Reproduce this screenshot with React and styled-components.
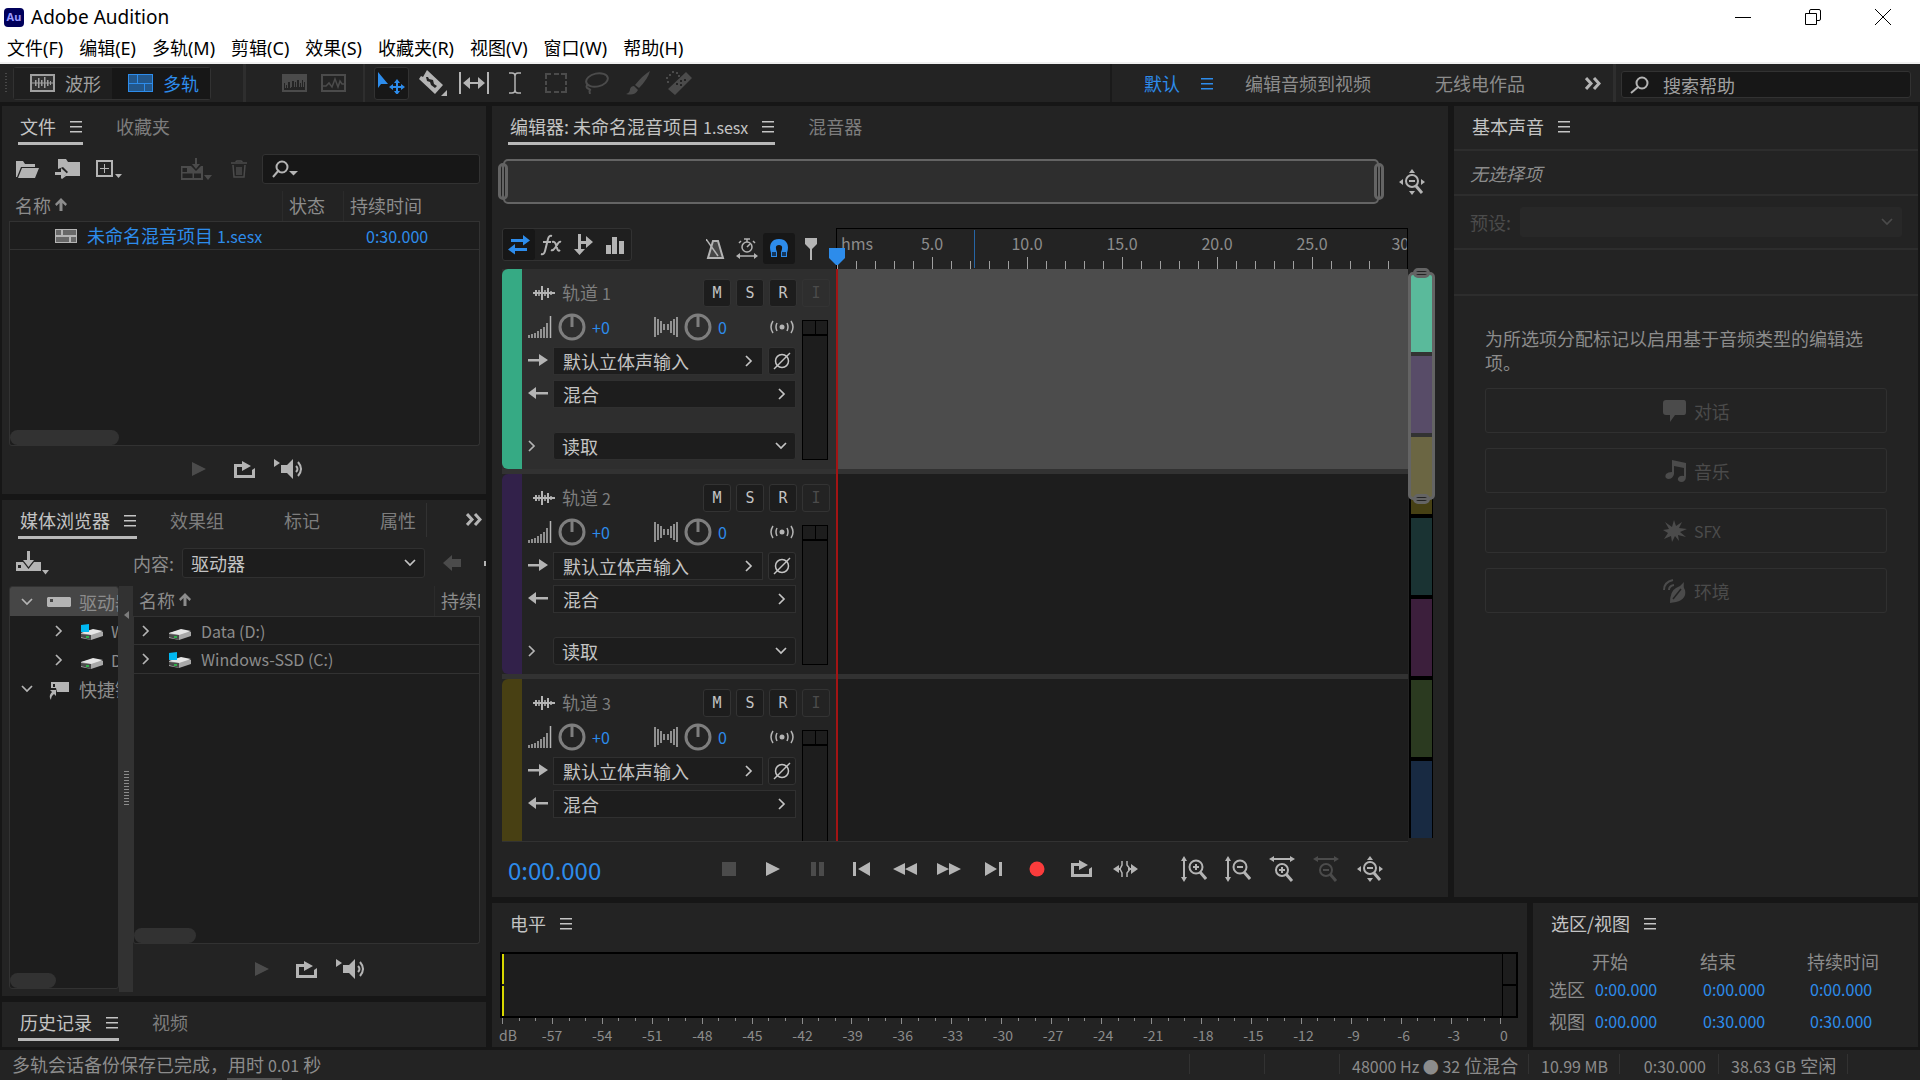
import styled, { createGlobalStyle, css } from "styled-components";

const COLORS = {
  APP: "#161616",
  PANEL: "#232323",
  WELL: "#1d1d1d",
  FIELD: "#171717",
  LINE: "#323232",
  TEXT: "#8c8c8c",
  BRIGHT: "#c4c4c4",
  ICON: "#b4b4b4",
  DISABLED: "#4b4b4b",
  BLUE: "#2d8ceb",
};

const FONTS = {
  APP: '"Noto Sans CJK SC", sans-serif',
  SYSTEM: '"Noto Sans", "Noto Sans CJK SC", sans-serif',
};

const GlobalStyle = createGlobalStyle`
  * {
    box-sizing: border-box;
  }
  body {
    margin: 0;
    background: ${COLORS.APP};
    font-family: ${FONTS.APP};
    font-size: 18px;
    line-height: 24px;
    color: ${COLORS.TEXT};
  }
  button, input, select {
    font: inherit;
    color: inherit;
    margin: 0;
    padding: 0;
    border: 0;
    background: none;
    outline: none;
  }
  svg {
    display: block;
    flex: none;
  }
`;

/* ---------- drawings ---------- */

const Glyph = ({ w, h, line, children }) => (
  <svg
    width={w}
    height={h}
    viewBox={`0 0 ${w} ${h}`}
    fill={line ? "none" : "currentColor"}
    stroke={line ? "currentColor" : "none"}
    strokeWidth={line || 0}
    aria-hidden="true"
  >
    {children}
  </svg>
);

const MenuLines = () => (
  <Glyph w={13} h={14}>
    <path d="M0 2h12v1H0zM0 7h12v1H0zM0 12h12v1H0z" />
    <path opacity=".5" d="M0 3h12v1H0zM0 8h12v1H0zM0 13h12v1H0z" />
  </Glyph>
);

const ChevronRight = () => (
  <Glyph w={8} h={12} line={2}>
    <path d="M1 1l5 5-5 5" strokeWidth="1.700" />
  </Glyph>
);

const ChevronDown = () => (
  <Glyph w={12} h={8} line={2}>
    <path d="M1 1l5 5 5-5" strokeWidth="1.700" />
  </Glyph>
);

const DoubleChevron = () => (
  <Glyph w={16} h={13} line={3}>
    <path d="M1 1l5 5.500-5 5.500M9 1l5 5.500-5 5.500" />
  </Glyph>
);

const SortArrow = () => (
  <Glyph w={12} h={14}>
    <path d="M6 0l6 6-1.500 2L7.500 5v8h-3V5l-3 3L0 6z" />
  </Glyph>
);

const SearchGlyph = () => (
  <Glyph w={19} h={18} line={2}>
    <circle cx="12" cy="7" r="5.500" />
    <path d="M8 11l-7 6" />
  </Glyph>
);

const WaveGlyph = () => (
  <Glyph w={25} h={18}>
    <path fillRule="evenodd" d="M0 0h25v18H0zM2 2v14h21V2z" />
    <path opacity=".15" d="M2 2h21v14H2z" />
    <path d="M2 8.500h21v1H2zM5 6h1.500v6H5zM8 4h1.500v10H8zM11 6h1.500v6H11zM14 3h1.500v11H14zM17 6h1.500v6H17zM20 7h1v4h-1z" />
  </Glyph>
);

const MultitrackGlyph = () => (
  <Glyph w={25} h={18}>
    <path opacity=".55" d="M0 0h25v18H0z" />
    <path fillRule="evenodd" d="M0 0h25v18H0zM1 1v8h8V1zM10 1v8h14V1zM1 10v7h15v-7zM17 10v7h7v-7z" />
  </Glyph>
);

const SessionGlyph = () => (
  <Glyph w={22} h={14}>
    <path opacity=".5" d="M0 0h22v14H0z" />
    <path fillRule="evenodd" d="M0 0h22v14H0zM1 1v5h5V1zM8 1v5h13V1zM1 8v5h13V8zM16 8v5h5V8z" />
  </Glyph>
);

const SpectralGlyph = () => (
  <Glyph w={25} h={18}>
    <path d="M0 0h25v18H0V0zm2 9v7h21V8h-1v5h-1V6h-1v7h-1V9h-1v4h-1V6h-2v7h-1V8h-1v5h-1V7h-2v6h-1V9H9v5H8V8H6v6H5v-3H4v3H3V9z" fillRule="evenodd" />
  </Glyph>
);

const PitchGlyph = () => (
  <Glyph w={25} h={18} line={2}>
    <path d="M1 1h23v16H1z" />
    <path d="M2 12h3l3-3 3 4 3-8 3 8 2-6 2 3h2" strokeWidth="1.500" />
  </Glyph>
);

const MoveGlyph = () => (
  <Glyph w={27} h={22}>
    <path d="M0 0l10 12H3l-3 4z" />
    <path d="M19 7l3 4h-2v3h3v-2l4 3-4 3v-2h-3v3h2l-3 4-3-4h2v-3h-3v2l-4-3 4-3v2h3v-3h-2z" />
  </Glyph>
);

const RazorGlyph = () => (
  <Glyph w={28} h={26}>
    <path fillRule="evenodd" d="M8 0l16 15-8 9L0 9l2-3 2 1zM7 7l1 4 3 1 1 3 4 3 2-2-3-2-1-4-4-1-1-2z" />
    <path d="M28 20v6h-6z" />
  </Glyph>
);

const TimeSelectGlyph = () => (
  <Glyph w={30} h={22}>
    <path d="M0 0h2v22H0zM28 0h2v22h-2z" />
    <path d="M4 11l7-6v5h8V5l7 6-7 6v-5h-8v5z" />
  </Glyph>
);

const BeamGlyph = () => (
  <Glyph w={12} h={22} line={2}>
    <path d="M0 1h3q3 0 3 3v14q0 3-3 3H0M12 1H9Q6 1 6 4v14q0 3 3 3h3" strokeWidth="1.500" />
  </Glyph>
);

const MarqueeGlyph = () => (
  <Glyph w={22} h={20} line={2}>
    <path d="M1 6V1h5M9 1h5M16 1h5v5M21 8v4M21 14v5h-5M14 19H9M6 19H1v-5M1 12V8" />
  </Glyph>
);

const LassoGlyph = () => (
  <Glyph w={25} h={22} line={2}>
    <ellipse cx="13" cy="8" rx="11" ry="6.500" transform="rotate(-12 13 8)" />
    <path d="M4 12q-3 3 0 4.500t2 1.500 0 4" />
  </Glyph>
);

const BrushGlyph = () => (
  <Glyph w={24} h={24}>
    <path d="M24 0q-2 8-11 17l-4-3Q17 4 24 0zM8 15l4 4q-3 6-12 4 4-1 4-5 1-3 4-3z" />
  </Glyph>
);

const HealGlyph = () => (
  <Glyph w={26} h={24}>
    <path fillRule="evenodd" d="M20 1l6 6L9 24l-7-6zM14 9v2h2V9zM18 8v2h2V8zM14 13v2h2v-2zM10 12v2h2v-2z" />
    <path d="M1 10h2v2H1zM0 6h2v2H0zM3 3h2v2H3zM6 0h2v2H6zM10 1h2v2h-2zM12 4h2v2h-2z" />
  </Glyph>
);

const FolderGlyph = () => (
  <Glyph w={23} h={18}>
    <path d="M0 17V1h7l2 3h10v3H5L1 17zM6 8h17l-4 10H2z" />
  </Glyph>
);

const ImportGlyph = () => (
  <Glyph w={25} h={20}>
    <path d="M3 10V0h8l2 3h12v14H11l-4 3v-4H0v-2h7v-3z" />
    <path d="M3 10l5-2 5 5-4 4H3z" fill={COLORS.PANEL} />
    <path d="M0 13h6v-4l6 5.500L6 20v-4H0z" />
  </Glyph>
);

const NewGlyph = () => (
  <Glyph w={26} h={18}>
    <path fillRule="evenodd" d="M0 0h17v17H0zM2 2v13h13V2z" />
    <path d="M8 4h1v4h4v1H9v4H8V9H4V8h4zM19 14h7l-3.500 4z" />
  </Glyph>
);

const InsertGlyph = () => (
  <Glyph w={31} h={23}>
    <path d="M14 0h2v6h3l-4 5-4-5h3zM23 17h8l-4 5z" />
    <path fillRule="evenodd" d="M0 8h10l5 5 5-5h2v14H0zM1.500 10v4H6v-4zM7.500 15.500H1.500V20h10v-4.500zM13 15.500V20h7v-4.500z" />
  </Glyph>
);

const TrashGlyph = () => (
  <Glyph w={16} h={18} line={2}>
    <path d="M0 3h16M5 2q0-1 1-1h4q1 0 1 1M2 5l1 12h10l1-12M6 7v8M8 7v8M10 7v8" strokeWidth="1.500" />
  </Glyph>
);

const FilterGlyph = () => (
  <Glyph w={26} h={18}>
    <circle cx="10" cy="7" r="5.500" fill="none" stroke="currentColor" strokeWidth="2" />
    <path d="M7 10l-6 7" stroke="currentColor" strokeWidth="2" />
    <path d="M17 11h9l-4.500 4.500z" />
  </Glyph>
);

const MediaImportGlyph = () => (
  <Glyph w={33} h={24}>
    <path d="M11 0h3v9h4l-5.500 7L7 9h4zM26 19h7l-3.500 4.500z" />
    <path fillRule="evenodd" d="M0 11h7l5.500 7 5.500-7h7v9H0zM2 14v3h3v-3z" />
  </Glyph>
);

const BackGlyph = () => (
  <Glyph w={18} h={16}>
    <path d="M9 0v4h9v8H9v4L0 8z" />
  </Glyph>
);

const DriveGlyph = () => (
  <Glyph w={24} h={10}>
    <path fillRule="evenodd" d="M1 0h22l1 1v8l-1 1H1L0 9V1zM3 2v3h3V2z" />
  </Glyph>
);

const ShortcutGlyph = () => (
  <Glyph w={24} h={22}>
    <path fillRule="evenodd" d="M4 4h18v10H10l-1-4H4zM6 6v3h2V6z" />
    <path d="M4 22q-3-4 1-8l-2-2h6v6l-2-2q-3 2-3 6z" />
  </Glyph>
);

const DiskGlyph = ({ system }) => (
  <svg width="22" height="20" viewBox="0 0 22 20" aria-hidden="true">
    <path d="M0 12l12-3 10 2v4l-12 4-10-2z" fill="#a8a8a8" />
    <path d="M0 12l12-4 10 2-12 4z" fill="#e6e6e6" />
    <path d="M0 13l10 1v5L0 16z" fill="#4a4a4a" />
    <path d="M5 15h3v2H5z" fill="#2fae4a" />
    {system && <path d="M0 4l8-1v8H0z" fill="#00b7f1" />}
  </svg>
);

const PlayGlyph = () => (
  <Glyph w={14} h={14}>
    <path d="M0 0l14 7-14 7z" />
  </Glyph>
);

const LoopGlyph = () => (
  <Glyph w={21} h={17}>
    <path d="M0 3h8V0l9 5-9 5V6H3v8h15V9l3-2v10H0z" />
  </Glyph>
);

const SpeakerGlyph = () => (
  <Glyph w={31} h={20}>
    <path d="M0 0l6 4-6 4zM7 6h6l6-6v20l-6-6H7z" />
    <path d="M22 7q3 3 0 6M24 3q6 7 0 14" fill="none" stroke="currentColor" strokeWidth="2" />
  </Glyph>
);

const SwapGlyph = () => (
  <Glyph w={22} h={20}>
    <path d="M3 4h12V0l7 5.500-7 5V7H3zM19 13H7V9l-7 5.500 7 5V16h12z" />
  </Glyph>
);

const FxGlyph = () => (
  <Glyph w={22} h={22} line={2}>
    <path d="M1 20q3 1 4-3l3-12q1-4 4-3M3 8h8M12 8q3-1 4 3l1 3q1 4 3 2M21 8q-2-1-4 3l-2 3q-2 3-4 2" />
  </Glyph>
);

const SendGlyph = () => (
  <Glyph w={19} h={21}>
    <path d="M4 0h3v7h5V2l7 6-7 6v-4H7v5h4l-5.500 6L0 15h4z" />
  </Glyph>
);

const EqGlyph = () => (
  <Glyph w={18} h={18}>
    <path d="M0 9h5v9H0zM6 1h5v17H6zM13 5h5v13h-5z" />
  </Glyph>
);

const MetronomeGlyph = () => (
  <Glyph w={19} h={20} line={2}>
    <path d="M7 2h5l5 17H2z" fill="currentColor" fillOpacity=".25" />
    <path d="M0 0l12 17" strokeWidth="1.500" />
  </Glyph>
);

const TimerGlyph = () => (
  <Glyph w={22} h={21} line={2}>
    <circle cx="11" cy="9" r="5" strokeWidth="1.500" />
    <path d="M8 1h6M11 1v3M17 3l2 2M5 3L3 5M11 9l3-3M3 18h16" strokeWidth="1.500" />
    <path d="M0 18l4-3v6zM22 18l-4-3v6z" fill="currentColor" stroke="none" />
  </Glyph>
);

const MagnetGlyph = () => (
  <Glyph w={18} h={19}>
    <path d="M1 18V14Q-2 5 4 1q5-2 10 0 6 4 3 13v4h-6v-5q3-7-2-7t-2 7v5z" />
    <path d="M2 13h4v4H2zM12 13h4v4h-4z" fill="#16365a" />
  </Glyph>
);

const MarkerGlyph = () => (
  <Glyph w={12} h={22}>
    <path d="M0 0h12v6L7 11v11H5V11L0 6z" />
  </Glyph>
);

const TrackWave = () => (
  <Glyph w={22} h={16} line={2}>
    <path d="M0 8h22M3 5v6M9 1v14M15 3v10" />
    <path d="M6 5v6M12 5v6M18 6v4" strokeWidth="1.500" />
  </Glyph>
);

const VolumeGlyph = () => (
  <Glyph w={24} h={22} line={2}>
    <path d="M1 22v-3M4 22v-4M7 22v-5M10 22v-7M13 22v-9M16 22V11M19 22V7M22.500 22V0" strokeWidth="1.500" />
  </Glyph>
);

const PanGlyph = () => (
  <Glyph w={24} h={20} line={2}>
    <path d="M1 0v20M4 2v16M7 4v12M10 7v6M14 7v6M17 4v12M20 2v16M23 0v20" strokeWidth="1.500" />
  </Glyph>
);

const KnobGlyph = () => (
  <Glyph w={28} h={28} line={3}>
    <circle cx="14" cy="14" r="12" stroke="#7e7e7e" />
    <path d="M14 2v12" stroke="#7e7e7e" />
  </Glyph>
);

const MonoGlyph = () => (
  <Glyph w={24} h={14} line={2}>
    <circle cx="12" cy="7" r="2.500" fill="currentColor" stroke="none" />
    <path d="M7 3q-2 4 0 8M17 3q2 4 0 8M3 1q-4 6 0 12M21 1q4 6 0 12" strokeWidth="1.500" />
  </Glyph>
);

const InArrow = () => (
  <Glyph w={20} h={14}>
    <path d="M0 5h11V0l9 6-9 6V7.500H0z" />
  </Glyph>
);

const OutArrow = () => (
  <Glyph w={20} h={14}>
    <path d="M20 5H8V0L0 6l8 6V7.500h12z" />
  </Glyph>
);

const PhaseGlyph = () => (
  <Glyph w={18} h={18} line={2}>
    <circle cx="9" cy="9" r="6.500" strokeWidth="1.500" />
    <path d="M1 17L17 1" strokeWidth="1.500" />
  </Glyph>
);

const StopGlyph = () => (
  <Glyph w={14} h={14}>
    <path d="M0 0h14v14H0z" />
  </Glyph>
);

const PauseGlyph = () => (
  <Glyph w={13} h={14}>
    <path d="M0 0h5v14H0zM8 0h5v14H8z" />
  </Glyph>
);

const PrevGlyph = () => (
  <Glyph w={17} h={14}>
    <path d="M0 0h3v14H0zM17 0v14L5 7z" />
  </Glyph>
);

const NextGlyph = () => (
  <Glyph w={17} h={14}>
    <path d="M14 0h3v14h-3zM0 0l12 7-12 7z" />
  </Glyph>
);

const RewindGlyph = () => (
  <Glyph w={24} h={12}>
    <path d="M12 0v12L0 6zM24 0v12L12 6z" />
  </Glyph>
);

const ForwardGlyph = () => (
  <Glyph w={24} h={12}>
    <path d="M0 0l12 6-12 6zM12 0l12 6-12 6z" />
  </Glyph>
);

const RecordGlyph = () => (
  <Glyph w={16} h={16}>
    <circle cx="8" cy="8" r="7.500" fill="#fa3c3c" />
  </Glyph>
);

const SkipGlyph = () => (
  <Glyph w={25} h={18} line={2}>
    <path d="M9 1v4L7 9l2 4v4M14 1v4l3 4-3 4v4" strokeWidth="1.500" />
    <path d="M6 5v8L0 9zM18 4l7 5-7 5z" fill="currentColor" stroke="none" />
    <path d="M4 9h4M15 9h5" />
  </Glyph>
);

const ZoomGlyph = ({ axis, plus }) => (
  <Glyph w={26} h={26} line={2}>
    {axis === "v" && (
      <>
        <path d="M3 3v20" />
        <path d="M3 0l3 5H0zM3 26l3-5H0z" fill="currentColor" stroke="none" />
        <circle cx="15" cy="11" r="6.500" />
        <path d="M12 11h6" />
        {plus && <path d="M15 8v6" />}
        <path d="M19 16l6 7" strokeWidth="3" />
      </>
    )}
    {axis === "h" && (
      <>
        <path d="M3 3h20" />
        <path d="M0 3l5-3v6zM26 3l-5-3v6z" fill="currentColor" stroke="none" />
        <circle cx="13" cy="14" r="6" />
        <path d="M10 14h6" />
        {plus && <path d="M13 11v6" />}
        <path d="M17 18l6 7" strokeWidth="3" />
      </>
    )}
    {axis === "full" && (
      <>
        <path d="M13 0l3 4h-6zM13 26l3-4h-6zM0 13l4-3v6zM26 13l-4-3v6z" fill="currentColor" stroke="none" />
        <circle cx="13" cy="12" r="6" />
        <path d="M10 12h6" />
        <path d="M17 17l6 7" strokeWidth="3" />
      </>
    )}
  </Glyph>
);

const SpeechGlyph = () => (
  <Glyph w={24} h={22}>
    <path d="M3 0h18q2 0 2 3v9q0 3-2 3h-9l-5 7v-7H3q-3 0-3-3V3q0-3 3-3z" />
  </Glyph>
);

const NotesGlyph = () => (
  <Glyph w={24} h={22}>
    <path d="M9 0l14 3v13q0 6-5 6-4-1-3-4 2-3 6-2V8l-10-2v8q-1 5-6 5-4-1-2-5 2-2 6-2z" />
  </Glyph>
);

const BurstGlyph = () => (
  <Glyph w={24} h={22}>
    <path d="M11 0l2 6 6-4-3 6 8 1-7 3 6 5-8-2 1 6-4-5-3 6-1-6-7 3 4-6-5-3 6-1-4-7 7 5z" />
  </Glyph>
);

const LeafGlyph = () => (
  <Glyph w={24} h={24}>
    <path d="M21 3q-1 5 1 8 2 9-9 12l-6 1q0-12 6-15 5-2 8-6z" />
    <path d="M10 20l8-10" stroke={COLORS.PANEL} strokeWidth="1.500" />
    <path d="M1 11q0-8 9-10M6 11q0-4 5-5" fill="none" stroke="currentColor" strokeWidth="2" />
  </Glyph>
);

/* ---------- shared parts ---------- */

const Panel = styled.section`
  display: flex;
  flex-direction: column;
  min-width: 0;
  min-height: 0;
  overflow: hidden;
  background: ${COLORS.PANEL};
  ${({ $width }) => $width && `flex: 0 0 ${$width}px;`}
  ${({ $height }) => $height && `flex: 0 0 ${$height}px;`}
  ${({ $grow }) => $grow && "flex: 1;"}
`;

const TabBar = styled.div`
  display: flex;
  flex: none;
  gap: 31px;
  padding: 8px 0 0 16px;
`;

const TabButton = styled.button`
  display: flex;
  align-items: center;
  gap: 14px;
  height: 31px;
  padding: 0 0 4px 2px;
  border-bottom: 3px solid ${({ $underlined }) => ($underlined ? "#b8b8b8" : "transparent")};
  color: ${({ $active }) => ($active ? COLORS.BRIGHT : "#7d7d7d")};
  white-space: nowrap;
  ${({ $active }) => !$active && "padding-right: 27px;"}
`;

const Latin = styled.span`
  font-size: 16px;
`;

const IconButton = styled.button`
  display: flex;
  align-items: center;
  justify-content: center;
  color: ${({ $tone }) => $tone || COLORS.ICON};
  width: ${({ $w }) => $w || 32}px;
  height: 32px;
`;

const Select = styled.select`
  appearance: none;
  width: 100%;
  height: 100%;
  padding: 0 10px 0 8px;
  color: ${COLORS.BRIGHT};
`;

const SelectBox = styled.span`
  display: flex;
  align-items: center;
  flex: 1;
  min-width: 0;
  height: ${({ $h }) => $h || 28}px;
  padding-right: 8px;
  border: 1px solid ${({ $flat }) => ($flat ? "#282828" : "#303030")};
  border-radius: 3px;
  background: ${({ $flat }) => ($flat ? "#282828" : COLORS.WELL)};
  color: ${({ $flat }) => ($flat ? COLORS.DISABLED : COLORS.BRIGHT)};
`;

const DropDown = ({ label, value, h, flat }) => (
  <SelectBox $h={h} $flat={flat}>
    <Select aria-label={label} disabled={flat}>
      <option>{value}</option>
    </Select>
    <ChevronDown />
  </SelectBox>
);

const Tab = ({ label, active, plain }) => (
  <TabButton type="button" $active={active} $underlined={active && !plain}>
    <span>{label}</span>
    {active && <MenuLines />}
  </TabButton>
);

/* ---------- window chrome ---------- */

const Page = styled.div`
  display: flex;
  flex-direction: column;
  height: 100vh;
  min-width: 1500px;
`;

const TitleBar = styled.header`
  display: flex;
  align-items: center;
  flex: none;
  height: 34px;
  padding-left: 4px;
  background: #fff;
  color: #000;
  font-family: ${FONTS.SYSTEM};
  font-size: 19px;
`;

const AppBadge = styled.span`
  width: 20px;
  height: 19px;
  margin-right: 7px;
  border-radius: 4px;
  background: #00005b;
  color: #9999ff;
  font-size: 11px;
  font-weight: 700;
  line-height: 18px;
  text-align: center;
`;

const WindowButtons = styled.div`
  display: flex;
  margin: 0 2px 0 auto;
`;

const WindowButton = styled.button`
  display: flex;
  align-items: center;
  justify-content: center;
  width: 70px;
  height: 34px;
`;

const MenuBar = styled.nav`
  display: flex;
  flex: none;
  gap: 16px;
  height: 30px;
  padding-left: 7px;
  border-bottom: 2px solid #f0f0f0;
  background: #fff;
  color: #000;
  font-family: ${FONTS.SYSTEM};
  line-height: 28px;
`;

const MenuButton = styled.button`
  white-space: nowrap;
`;

const Toolbar = styled.div`
  display: flex;
  align-items: center;
  flex: none;
  height: 38px;
  padding-left: 5px;
  background: ${COLORS.PANEL};
  white-space: nowrap;
`;

const Grip = styled.span`
  width: 2px;
  height: 20px;
  margin-right: 6px;
  background: repeating-linear-gradient(#484848 0 1px, transparent 1px 3px);
`;

const ModeGroup = styled.div`
  display: flex;
  height: 33px;
  margin-right: 32px;
  border: 1px solid ${COLORS.LINE};
  border-radius: 3px;
`;

const ModeButton = styled.button`
  display: flex;
  align-items: center;
  gap: 10px;
  width: 98px;
  padding-left: 16px;
  background: ${({ $active }) => ($active ? COLORS.FIELD : "#1f1f1f")};
  color: ${({ $active }) => ($active ? COLORS.BLUE : "#a0a0a0")};
`;

const Divider = styled.span`
  flex: none;
  width: ${({ $w }) => $w || 2}px;
  height: 100%;
  background: ${({ $dark }) => ($dark ? "#1a1a1a" : "#2e2e2e")};
`;

const ViewIcons = styled.div`
  display: flex;
  gap: 7px;
  margin: 0 14px 0 32px;
`;

const ToolIcons = styled.div`
  display: flex;
  gap: 6px;
  margin-left: 9px;
`;

const ToolButton = styled(IconButton)`
  width: 35px;
  height: 33px;
  border-radius: 3px;
  ${({ $active }) =>
    $active &&
    css`
      border: 1px solid ${COLORS.LINE};
      background: ${COLORS.FIELD};
      color: ${COLORS.BLUE};
    `}
`;

const WorkspaceBar = styled.div`
  display: flex;
  align-items: center;
  height: 100%;
  margin-left: auto;
`;

const WorkspaceButton = styled.button`
  display: flex;
  align-items: center;
  gap: 21px;
  margin-left: ${({ $gap }) => $gap}px;
  color: ${({ $active }) => ($active ? COLORS.BLUE : COLORS.TEXT)};
`;

const MoreButton = styled(IconButton)`
  width: 76px;
  margin-right: 12px;
  justify-content: flex-end;
`;

const HelpSearch = styled.label`
  display: flex;
  align-items: center;
  gap: 14px;
  width: 290px;
  height: 27px;
  margin: 3px 9px 0 5px;
  padding-left: 8px;
  border: 1px solid ${COLORS.LINE};
  border-radius: 3px;
  background: ${COLORS.FIELD};
  color: ${COLORS.ICON};
`;

const TextInput = styled.input`
  flex: 1;
  min-width: 0;
  &::placeholder {
    color: #a0a0a0;
    opacity: 1;
  }
`;

const MENUS = ["文件(F)", "编辑(E)", "多轨(M)", "剪辑(C)", "效果(S)", "收藏夹(R)", "视图(V)", "窗口(W)", "帮助(H)"];

const TOOLS = [
  { label: "移动工具", glyph: <MoveGlyph />, active: true },
  { label: "切断所选剪辑工具", glyph: <RazorGlyph /> },
  { label: "滑动工具", glyph: <TimeSelectGlyph /> },
  { label: "时间选择工具", glyph: <BeamGlyph /> },
  { label: "框选工具", glyph: <MarqueeGlyph />, off: true },
  { label: "套索选择工具", glyph: <LassoGlyph />, off: true },
  { label: "画笔选择工具", glyph: <BrushGlyph />, off: true },
  { label: "污点修复刷工具", glyph: <HealGlyph />, off: true },
];

const Chrome = () => (
  <>
    <TitleBar>
      <AppBadge>Au</AppBadge>
      <span>Adobe Audition</span>
      <WindowButtons>
        <WindowButton type="button" aria-label="最小化">
          <Glyph w={16} h={16} line={1}><path d="M0 8.500h16" /></Glyph>
        </WindowButton>
        <WindowButton type="button" aria-label="还原">
          <Glyph w={16} h={16} line={1}><path d="M.5 4.500h11v11H.5zM4.500 4V2q0-1.500 1.500-1.500h8q1.500 0 1.500 1.500v8q0 1.500-1.500 1.500h-2" /></Glyph>
        </WindowButton>
        <WindowButton type="button" aria-label="关闭">
          <Glyph w={16} h={16} line={1}><path d="M0 0l16 16M16 0L0 16" /></Glyph>
        </WindowButton>
      </WindowButtons>
    </TitleBar>
    <MenuBar>
      {MENUS.map((menu) => (
        <MenuButton type="button" key={menu}>{menu}</MenuButton>
      ))}
    </MenuBar>
    <Toolbar>
      <Grip />
      <ModeGroup>
        <ModeButton type="button"><WaveGlyph />波形</ModeButton>
        <ModeButton type="button" $active><MultitrackGlyph />多轨</ModeButton>
      </ModeGroup>
      <Divider $w={3} />
      <ViewIcons>
        <IconButton type="button" aria-label="频谱" $tone={COLORS.DISABLED}><SpectralGlyph /></IconButton>
        <IconButton type="button" aria-label="音高" $tone={COLORS.DISABLED}><PitchGlyph /></IconButton>
      </ViewIcons>
      <Divider />
      <ToolIcons>
        {TOOLS.map((tool) => (
          <ToolButton
            type="button"
            key={tool.label}
            aria-label={tool.label}
            $active={tool.active}
            $tone={tool.off && COLORS.DISABLED}
          >
            {tool.glyph}
          </ToolButton>
        ))}
      </ToolIcons>
      <WorkspaceBar>
        <Divider $dark />
        <WorkspaceButton type="button" $gap={32} $active>默认<MenuLines /></WorkspaceButton>
        <WorkspaceButton type="button" $gap={31}>编辑音频到视频</WorkspaceButton>
        <WorkspaceButton type="button" $gap={64}>无线电作品</WorkspaceButton>
        <MoreButton type="button" aria-label="更多工作区"><DoubleChevron /></MoreButton>
        <Divider $w={3} />
        <HelpSearch>
          <SearchGlyph />
          <TextInput type="text" placeholder="搜索帮助" aria-label="搜索帮助" />
        </HelpSearch>
      </WorkspaceBar>
    </Toolbar>
  </>
);

/* ---------- left column ---------- */

const Workspace = styled.main`
  display: flex;
  flex: 1;
  gap: 6px;
  min-height: 0;
  padding: 4px 2px 3px;
`;

const Column = styled.div`
  display: flex;
  flex-direction: column;
  gap: 6px;
  min-width: 0;
  min-height: 0;
  ${({ $width }) => ($width ? `flex: 0 0 ${$width}px;` : "flex: 1;")}
`;

const PanelRow = styled.div`
  display: flex;
  gap: 6px;
  min-height: 0;
  ${({ $height }) => ($height ? `flex: 0 0 ${$height}px;` : "flex: 1;")}
`;

const FileTools = styled.div`
  display: flex;
  align-items: center;
  flex: none;
  height: 30px;
  margin: 9px 6px 7px 14px;
`;

const FileToolGroup = styled.div`
  display: flex;
  gap: ${({ $gap }) => $gap}px;
  margin-right: ${({ $after }) => $after}px;
`;

const BareButton = styled.button`
  display: flex;
  align-items: center;
  color: ${({ $off }) => ($off ? COLORS.DISABLED : COLORS.ICON)};
`;

const FileSearch = styled.label`
  display: flex;
  align-items: center;
  flex: 1;
  min-width: 0;
  height: 30px;
  padding-left: 9px;
  border: 1px solid ${COLORS.LINE};
  border-radius: 3px;
  background: ${COLORS.FIELD};
  color: ${COLORS.ICON};
`;

const ListArea = styled.div`
  display: flex;
  flex-direction: column;
  flex: 1;
  min-height: 0;
  margin-left: ${({ $inset }) => ($inset ? 0 : 7)}px;
  margin-right: ${({ $inset }) => ($inset ? 0 : 6)}px;
`;

const ListTable = styled.table`
  width: 100%;
  table-layout: fixed;
  border-spacing: 0;
`;

const HeadCell = styled.th`
  width: ${({ $w }) => ($w ? `${$w}px` : "auto")};
  height: 30px;
  padding: 0 0 3px 6px;
  overflow: hidden;
  font-weight: 400;
  text-align: left;
  white-space: nowrap;
  & + & {
    border-left: 1px solid #2b2b2b;
  }
`;

const HeadLabel = styled.span`
  display: flex;
  align-items: center;
  gap: 4px;
`;

const Cell = styled.td`
  height: 29px;
  padding: 0 0 0 8px;
  overflow: hidden;
  border: 0 solid ${COLORS.LINE};
  border-bottom-width: 1px;
  background: ${COLORS.WELL};
  white-space: nowrap;
  color: ${({ $link }) => ($link ? COLORS.BLUE : COLORS.TEXT)};
  tr:first-child > & {
    border-top-width: 1px;
  }
  &:first-child {
    border-left-width: 1px;
  }
  &:last-child {
    border-right-width: 1px;
  }
`;

const FileName = styled.span`
  display: flex;
  align-items: center;
  gap: 10px;
  padding-left: 37px;
`;

const FileIcon = styled.span`
  color: ${COLORS.ICON};
`;

const FileTime = styled.span`
  padding-left: 15px;
`;

const DriveName = styled.span`
  display: flex;
  align-items: center;
  color: ${COLORS.ICON};
  svg + svg {
    margin: 0 10px 0 19px;
  }
  ${Latin} {
    color: ${COLORS.TEXT};
  }
`;

const ListFill = styled.div`
  display: flex;
  align-items: flex-end;
  flex: 1;
  border: 1px solid ${COLORS.LINE};
  border-top: 0;
  border-radius: 0 0 3px 3px;
  background: ${COLORS.WELL};
`;

const ScrollThumb = styled.span`
  width: ${({ $w }) => $w}px;
  height: 15px;
  border-radius: 8px;
  background: ${COLORS.LINE};
`;

const PreviewBar = styled.div`
  display: flex;
  align-items: center;
  justify-content: center;
  flex: none;
  gap: 14px;
  height: ${({ $h }) => $h}px;
  padding-bottom: 2px;
`;

const PreviewButton = styled(BareButton)`
  justify-content: center;
  width: 31px;
  height: 24px;
`;

const Preview = ({ h }) => (
  <PreviewBar $h={h}>
    <PreviewButton type="button" aria-label="播放" $off><PlayGlyph /></PreviewButton>
    <PreviewButton type="button" aria-label="循环播放"><LoopGlyph /></PreviewButton>
    <PreviewButton type="button" aria-label="自动播放"><SpeakerGlyph /></PreviewButton>
  </PreviewBar>
);

const FilesPanel = () => (
  <Panel $height={388}>
    <TabBar>
      <Tab label="文件" active />
      <Tab label="收藏夹" />
    </TabBar>
    <FileTools>
      <FileToolGroup $gap={16} $after={59}>
        <BareButton type="button" aria-label="打开文件"><FolderGlyph /></BareButton>
        <BareButton type="button" aria-label="导入文件"><ImportGlyph /></BareButton>
        <BareButton type="button" aria-label="新建文件"><NewGlyph /></BareButton>
      </FileToolGroup>
      <FileToolGroup $gap={19} $after={15}>
        <BareButton type="button" aria-label="插入到多轨" $off><InsertGlyph /></BareButton>
        <BareButton type="button" aria-label="删除" $off><TrashGlyph /></BareButton>
      </FileToolGroup>
      <FileSearch>
        <FilterGlyph />
        <TextInput type="text" aria-label="筛选文件" />
      </FileSearch>
    </FileTools>
    <ListArea>
      <ListTable>
        <thead>
          <tr>
            <HeadCell><HeadLabel>名称<SortArrow /></HeadLabel></HeadCell>
            <HeadCell $w={61}>状态</HeadCell>
            <HeadCell $w={137}>持续时间</HeadCell>
          </tr>
        </thead>
        <tbody>
          <tr>
            <Cell $link>
              <FileName>
                <FileIcon><SessionGlyph /></FileIcon>
                <span>未命名混音项目 <Latin>1.sesx</Latin></span>
              </FileName>
            </Cell>
            <Cell />
            <Cell $link><FileTime><Latin>0:30.000</Latin></FileTime></Cell>
          </tr>
        </tbody>
      </ListTable>
      <ListFill><ScrollThumb $w={109} /></ListFill>
    </ListArea>
    <Preview h={48} />
  </Panel>
);

const MediaTabs = styled.div`
  display: flex;
  flex: none;
  padding-right: 4px;
`;

const TabClip = styled.div`
  flex: 1;
  min-width: 0;
  overflow: hidden;
`;

const TabOverflow = styled.div`
  display: flex;
  align-items: center;
  gap: 39px;
  height: 39px;
  color: ${COLORS.ICON};
`;

const TabDivider = styled.span`
  flex: none;
  width: 1px;
  height: 34px;
  background: ${COLORS.LINE};
`;

const ContentRow = styled.div`
  display: flex;
  align-items: center;
  flex: none;
  height: 30px;
  margin: 9px 0 8px 14px;
`;

const ContentLabel = styled.label`
  display: flex;
  align-items: center;
  gap: 8px;
  width: 292px;
  margin: 0 18px 0 84px;
  white-space: nowrap;
`;

const ClippedArrow = styled.span`
  width: 2px;
  height: 5px;
  margin-left: auto;
  background: ${COLORS.ICON};
`;

const MediaBody = styled.div`
  display: flex;
  flex: 1;
  min-height: 0;
`;

const Tree = styled.ul`
  display: flex;
  flex-direction: column;
  flex: none;
  width: 110px;
  margin: 0 0 7px 7px;
  padding: 0;
  overflow: hidden;
  border: 1px solid ${COLORS.LINE};
  border-radius: 3px;
  background: ${COLORS.WELL};
  list-style: none;
`;

const TreeRow = styled.li`
  display: flex;
  align-items: center;
  flex: none;
  gap: 8px;
  height: 29px;
  padding-left: ${({ $depth }) => ($depth ? 45 : 11)}px;
  background: ${({ $selected }) => ($selected ? "#464646" : "none")};
  color: ${COLORS.ICON};
  white-space: nowrap;
  svg:first-child {
    margin-right: ${({ $depth }) => ($depth ? 10 : 6)}px;
  }
`;

const TreeText = styled.span`
  flex: 1;
  min-width: 0;
  overflow: hidden;
  color: ${COLORS.TEXT};
`;

const TreeFill = styled.li`
  display: flex;
  align-items: flex-end;
  flex: 1;
`;

const Splitter = styled.div`
  display: flex;
  flex-direction: column;
  align-items: center;
  flex: none;
  gap: 152px;
  width: 14px;
  margin-bottom: 4px;
  padding-top: 25px;
  background: ${COLORS.LINE};
  color: #7d7d7d;
`;

const SplitterGrip = styled.span`
  width: 5px;
  height: 36px;
  background: repeating-linear-gradient(#8c8c8c 0 1px, transparent 1px 3px);
`;

const MediaList = styled.div`
  display: flex;
  flex-direction: column;
  flex: 1;
  min-width: 0;
  padding-right: 6px;
`;

const DRIVES = [
  { name: "Data (D:)" },
  { name: "Windows-SSD (C:)", system: true },
];

const MediaPanel = () => (
  <Panel $grow>
    <MediaTabs>
      <TabClip>
        <TabBar>
          <Tab label="媒体浏览器" active />
          <Tab label="效果组" />
          <Tab label="标记" />
          <Tab label="属性" />
        </TabBar>
      </TabClip>
      <TabOverflow>
        <TabDivider />
        <DoubleChevron />
      </TabOverflow>
    </MediaTabs>
    <ContentRow>
      <BareButton type="button" aria-label="导入"><MediaImportGlyph /></BareButton>
      <ContentLabel>
        内容:
        <DropDown label="内容" value="驱动器" h={30} />
      </ContentLabel>
      <BareButton type="button" aria-label="后退" $off><BackGlyph /></BareButton>
      <ClippedArrow />
    </ContentRow>
    <MediaBody>
      <Tree>
        <TreeRow $selected><ChevronDown /><DriveGlyph /><TreeText>驱动器</TreeText></TreeRow>
        <TreeRow $depth><ChevronRight /><DiskGlyph system /><TreeText><Latin>Windows-SSD (C:)</Latin></TreeText></TreeRow>
        <TreeRow $depth><ChevronRight /><DiskGlyph /><TreeText><Latin>Data (D:)</Latin></TreeText></TreeRow>
        <TreeRow><ChevronDown /><ShortcutGlyph /><TreeText>快捷键</TreeText></TreeRow>
        <TreeFill><ScrollThumb $w={46} /></TreeFill>
      </Tree>
      <Splitter>
        <Glyph w={5} h={8}><path d="M5 0v8L0 4z" /></Glyph>
        <SplitterGrip />
      </Splitter>
      <MediaList>
        <ListArea $inset>
          <ListTable>
            <thead>
              <tr>
                <HeadCell><HeadLabel>名称<SortArrow /></HeadLabel></HeadCell>
                <HeadCell $w={46}>持续时间</HeadCell>
              </tr>
            </thead>
            <tbody>
              {DRIVES.map((drive) => (
                <tr key={drive.name}>
                  <Cell>
                    <DriveName>
                      <ChevronRight />
                      <DiskGlyph system={drive.system} />
                      <Latin>{drive.name}</Latin>
                    </DriveName>
                  </Cell>
                  <Cell />
                </tr>
              ))}
            </tbody>
          </ListTable>
          <ListFill><ScrollThumb $w={62} /></ListFill>
        </ListArea>
        <Preview h={52} />
      </MediaList>
    </MediaBody>
  </Panel>
);

/* ---------- editor ---------- */

const OverviewRow = styled.div`
  display: flex;
  align-items: center;
  flex: none;
  justify-content: space-between;
  margin: 14px 23px 0 6px;
`;

const Overview = styled.div`
  position: relative;
  flex: 1;
  height: 45px;
  margin: 0 20px 0 5px;
  border: 2px solid #646464;
  border-radius: 5px;
  background: #2e2e2e;
`;

const OverviewHandle = styled.span`
  position: absolute;
  top: 2px;
  bottom: 2px;
  ${({ $side }) => $side}: -7px;
  width: 10px;
  border: 3px solid #646464;
  border-radius: 5px;
  background: linear-gradient(90deg, #232323 1px, #646464 1px 3px, #232323 3px);
`;

const TrackArea = styled.div`
  display: grid;
  grid-template-columns: 334px minmax(0, 1fr) 27px;
  grid-template-rows: 41px minmax(0, 1fr);
  flex: 1;
  min-height: 0;
  margin: 24px 13px 0 10px;
`;

const TrackTools = styled.div`
  display: flex;
  align-items: center;
  justify-content: space-between;
  padding-right: 9px;
`;

const TrackToolGroup = styled.div`
  display: flex;
  align-self: ${({ $boxed }) => ($boxed ? "flex-start" : "center")};
  ${({ $boxed }) =>
    $boxed &&
    css`
      border: 1px solid ${COLORS.LINE};
      border-radius: 3px;
      background: #1f1f1f;
    `}
`;

const TrackTool = styled(IconButton)`
  height: 31px;
  border-radius: 3px;
  ${({ $active }) =>
    $active &&
    css`
      background: ${COLORS.FIELD};
      color: ${COLORS.BLUE};
    `}
`;

const Ruler = styled.div`
  position: relative;
  display: flex;
  flex-direction: column;
  border: 1px solid #000;
  border-bottom: 0;
`;

const RulerClip = styled.div`
  display: flex;
  flex-direction: column;
  flex: 1;
  overflow: hidden;
`;

const RulerLabels = styled.div`
  display: flex;
  font-size: 16px;
  line-height: 28px;
`;

const RulerLabel = styled.span`
  flex: 0 0 calc(500% / 30);
  text-align: center;
`;

const RulerUnit = styled.span`
  flex: 0 0 calc(250% / 30);
  padding-left: 4px;
`;

const RulerTicks = styled.div`
  display: flex;
  align-items: flex-end;
  height: 12px;
`;

const RulerTick = styled.span`
  flex: 0 0 calc(100% / 30);
  height: ${({ $major }) => ($major ? 12 : 8)}px;
  border-left: 1px solid #a0a0a0;
`;

const RulerCursor = styled.span`
  position: absolute;
  top: 1px;
  bottom: 1px;
  left: 24%;
  width: 1px;
  background: #2665a5;
`;

const Playhead = styled.span`
  position: absolute;
  left: -8px;
  bottom: 3px;
  color: ${COLORS.BLUE};
`;

const TrackList = styled.div`
  grid-column: 1 / 3;
  overflow: hidden;
  border-bottom: 1px solid ${COLORS.LINE};
`;

const Track = styled.article`
  display: flex;
  height: 205px;
`;

const TrackHeader = styled.div`
  display: flex;
  flex: none;
  width: 334px;
  border-bottom: 5px solid ${COLORS.LINE};
  background: ${({ $selected }) => ($selected ? "#2e2e2e" : COLORS.PANEL)};
`;

const TrackColor = styled.span`
  flex: none;
  width: 20px;
  border-radius: 6px 0 0 6px;
  background: ${({ $color }) => $color};
`;

const TrackBody = styled.div`
  flex: 1;
  min-width: 0;
  padding: 9px 6px 0 6px;
`;

const TrackTop = styled.div`
  display: flex;
  align-items: center;
  gap: 7px;
  height: 29px;
  padding-left: 5px;
  color: ${COLORS.ICON};
`;

const TrackName = styled.span`
  flex: 1;
  color: #7d7d7d;
`;

const TrackButtons = styled.div`
  display: flex;
  gap: 5px;
`;

const SquareButton = styled.button`
  display: flex;
  align-items: center;
  justify-content: center;
  flex: none;
  width: 28px;
  height: 28px;
  border: 1px solid #333;
  border-radius: 3px;
  background: ${({ $off }) => ($off ? "transparent" : COLORS.WELL)};
  color: ${({ $off }) => ($off ? COLORS.DISABLED : COLORS.BRIGHT)};
  font-family: "DejaVu Sans Mono", monospace;
  font-size: 15px;
  line-height: 20px;
`;

const TrackMain = styled.div`
  display: flex;
  gap: 6px;
`;

const TrackControls = styled.div`
  display: flex;
  flex-direction: column;
  width: 268px;
`;

const KnobRow = styled.div`
  display: flex;
  align-items: center;
  height: 40px;
  gap: 6px;
  color: ${COLORS.ICON};
`;

const KnobValue = styled.span`
  width: ${({ $wide }) => ($wide ? 56 : 46)}px;
  color: ${COLORS.BLUE};
  font-size: 16px;
`;

const RouteRow = styled.div`
  display: flex;
  align-items: center;
  gap: 5px;
  height: 28px;
  margin-bottom: ${({ $after }) => $after || 0}px;
  color: ${COLORS.ICON};
`;

const RouteIcon = styled.span`
  width: 20px;
`;

const RouteButton = styled.button`
  display: flex;
  align-items: center;
  justify-content: space-between;
  flex: 1;
  height: 28px;
  padding: 0 9px;
  border: 1px solid #303030;
  background: ${COLORS.WELL};
  color: ${COLORS.BRIGHT};
`;

const Meter = styled.div`
  width: 26px;
  height: 140px;
  margin-top: 13px;
  border: 1px solid #000;
  background: linear-gradient(90deg, transparent 12px, #000 12px 13px, transparent 13px) 0 0 / 100% 13px no-repeat,
    linear-gradient(#000, #000) 0 13px / 100% 2px no-repeat, ${COLORS.WELL};
`;

const Lane = styled.div`
  flex: 1;
  border-left: 2px solid #a31414;
  background: ${({ $selected }) => ($selected ? "#4c4c4c" : COLORS.WELL)};
  box-shadow: inset 0 -5px ${COLORS.LINE};
`;

const MiniMap = styled.div`
  position: relative;
  display: flex;
  flex-direction: column;
  gap: 4px;
  margin: 0 2px 4px 1px;
  padding: 6px 1px 0 2px;
  background: linear-gradient(transparent 4px, #000 4px);
`;

const MiniTrack = styled.span`
  flex: 1;
  background: ${({ $color }) => $color};
`;

const MiniView = styled.span`
  position: absolute;
  top: 3px;
  left: -1px;
  right: -2px;
  height: 40%;
  border: 3px solid #646464;
  border-radius: 5px;
  background: rgba(255, 255, 255, 0.2);
`;

const MiniHandle = styled.span`
  position: absolute;
  ${({ $edge }) => $edge}: -7px;
  left: 2px;
  right: 2px;
  height: 10px;
  border: 3px solid #646464;
  border-radius: 5px;
  background: linear-gradient(#232323 1px, #646464 1px 3px, #232323 3px);
`;

const TransportBar = styled.div`
  display: flex;
  align-items: center;
  flex: none;
  height: 55px;
  padding-left: 16px;
`;

const TimeCode = styled.span`
  width: 199px;
  color: ${COLORS.BLUE};
  font-size: 24px;
  line-height: 26px;
`;

const ButtonStrip = styled.div`
  display: flex;
  margin-right: 25px;
  padding-bottom: 2px;
`;

const SECONDS = Array.from({ length: 31 }, (_, i) => i);
const RULER_LABELS = ["5.0", "10.0", "15.0", "20.0", "25.0", "30.0"];

const TRACKS = [
  { name: 1, color: "#36aa84", selected: true },
  { name: 2, color: "#32214a" },
  { name: 3, color: "#484013" },
];

const MINI_COLORS = ["#31a983", "#2f2043", "#464014", "#1a3333", "#3c1f3c", "#2b3a20", "#182a42"];

const TRANSPORT = [
  { label: "停止", glyph: <StopGlyph />, off: true },
  { label: "播放", glyph: <PlayGlyph /> },
  { label: "暂停", glyph: <PauseGlyph />, off: true },
  { label: "移到上一个", glyph: <PrevGlyph /> },
  { label: "快退", glyph: <RewindGlyph /> },
  { label: "快进", glyph: <ForwardGlyph /> },
  { label: "移到下一个", glyph: <NextGlyph /> },
  { label: "录制", glyph: <RecordGlyph /> },
  { label: "循环播放", glyph: <LoopGlyph /> },
  { label: "跳过所选项目", glyph: <SkipGlyph /> },
];

const ZOOMS = [
  { label: "放大振幅", glyph: <ZoomGlyph axis="v" plus /> },
  { label: "缩小振幅", glyph: <ZoomGlyph axis="v" /> },
  { label: "放大时间", glyph: <ZoomGlyph axis="h" plus /> },
  { label: "缩小时间", glyph: <ZoomGlyph axis="h" />, off: true },
  { label: "全部缩小", glyph: <ZoomGlyph axis="full" /> },
];

const Strip = ({ items }) => (
  <ButtonStrip>
    {items.map((item) => (
      <IconButton
        type="button"
        key={item.label}
        aria-label={item.label}
        $w={44}
        $tone={item.off && COLORS.DISABLED}
      >
        {item.glyph}
      </IconButton>
    ))}
  </ButtonStrip>
);

const TrackItem = ({ track }) => (
  <Track>
    <TrackHeader $selected={track.selected}>
      <TrackColor $color={track.color} />
      <TrackBody>
        <TrackTop>
          <TrackWave />
          <TrackName>轨道 <Latin>{track.name}</Latin></TrackName>
          <TrackButtons>
            <SquareButton type="button">M</SquareButton>
            <SquareButton type="button">S</SquareButton>
            <SquareButton type="button">R</SquareButton>
            <SquareButton type="button" $off>I</SquareButton>
          </TrackButtons>
        </TrackTop>
        <TrackMain>
          <TrackControls>
            <KnobRow>
              <VolumeGlyph />
              <KnobGlyph />
              <KnobValue $wide>+0</KnobValue>
              <PanGlyph />
              <KnobGlyph />
              <KnobValue>0</KnobValue>
              <MonoGlyph />
            </KnobRow>
            <RouteRow $after={5}>
              <RouteIcon><InArrow /></RouteIcon>
              <RouteButton type="button">默认立体声输入<ChevronRight /></RouteButton>
              <SquareButton type="button" aria-label="反相"><PhaseGlyph /></SquareButton>
            </RouteRow>
            <RouteRow $after={24}>
              <RouteIcon><OutArrow /></RouteIcon>
              <RouteButton type="button">混合<ChevronRight /></RouteButton>
            </RouteRow>
            <RouteRow>
              <RouteIcon><ChevronRight /></RouteIcon>
              <DropDown label="自动化模式" value="读取" />
            </RouteRow>
          </TrackControls>
          <Meter />
        </TrackMain>
      </TrackBody>
    </TrackHeader>
    <Lane $selected={track.selected} />
  </Track>
);

const EditorPanel = () => (
  <Panel $grow>
    <TabBar>
      <Tab label={<>编辑器: 未命名混音项目 <Latin>1.sesx</Latin></>} active />
      <Tab label="混音器" />
    </TabBar>
    <OverviewRow>
      <Overview>
        <OverviewHandle $side="left" />
        <OverviewHandle $side="right" />
      </Overview>
      <BareButton type="button" aria-label="全部缩小"><ZoomGlyph axis="full" /></BareButton>
    </OverviewRow>
    <TrackArea>
      <TrackTools>
        <TrackToolGroup $boxed>
          <TrackTool type="button" aria-label="输入/输出" $active><SwapGlyph /></TrackTool>
          <TrackTool type="button" aria-label="效果"><FxGlyph /></TrackTool>
          <TrackTool type="button" aria-label="发送"><SendGlyph /></TrackTool>
          <TrackTool type="button" aria-label="EQ"><EqGlyph /></TrackTool>
        </TrackToolGroup>
        <TrackToolGroup>
          <TrackTool type="button" aria-label="节拍器"><MetronomeGlyph /></TrackTool>
          <TrackTool type="button" aria-label="时间伸缩"><TimerGlyph /></TrackTool>
          <TrackTool type="button" aria-label="对齐" $active><MagnetGlyph /></TrackTool>
          <TrackTool type="button" aria-label="添加标记"><MarkerGlyph /></TrackTool>
        </TrackToolGroup>
      </TrackTools>
      <Ruler>
        <RulerClip>
          <RulerLabels>
            <RulerUnit>hms</RulerUnit>
            {RULER_LABELS.map((label) => (
              <RulerLabel key={label}>{label}</RulerLabel>
            ))}
          </RulerLabels>
          <RulerTicks>
            {SECONDS.map((second) => (
              <RulerTick key={second} $major={second % 5 === 0} />
            ))}
          </RulerTicks>
        </RulerClip>
        <RulerCursor />
        <Playhead>
          <Glyph w={16} h={18}><path d="M0 0h16v10l-7 7H7l-7-7z" /></Glyph>
        </Playhead>
      </Ruler>
      <span />
      <TrackList>
        {TRACKS.map((track) => (
          <TrackItem key={track.name} track={track} />
        ))}
      </TrackList>
      <MiniMap>
        {MINI_COLORS.map((color) => (
          <MiniTrack key={color} $color={color} />
        ))}
        <MiniView>
          <MiniHandle $edge="top" />
          <MiniHandle $edge="bottom" />
        </MiniView>
      </MiniMap>
    </TrackArea>
    <TransportBar>
      <TimeCode>0:00.000</TimeCode>
      <Strip items={TRANSPORT} />
      <Strip items={ZOOMS} />
    </TransportBar>
  </Panel>
);

/* ---------- essential sound ---------- */

const SoundRow = styled.div`
  display: flex;
  align-items: center;
  flex: none;
  gap: 9px;
  height: ${({ $h }) => $h}px;
  padding: 0 16px 0 16px;
  border-top: 2px solid #2d2d2d;
  font-style: ${({ $italic }) => ($italic ? "italic" : "normal")};
  color: ${({ $off }) => ($off ? COLORS.DISABLED : COLORS.TEXT)};
`;

const SoundHead = styled.div`
  flex: none;
  height: 43px;
`;

const SoundBody = styled.div`
  display: flex;
  flex-direction: column;
  flex: 1;
  gap: 15px;
  padding: 30px 31px 0;
  border-top: 2px solid #2d2d2d;
`;

const SoundHint = styled.p`
  margin: 0 0 -1px;
`;

const SoundButton = styled.button`
  display: flex;
  align-items: center;
  height: 45px;
  padding-left: 44%;
  gap: 7px;
  border: 1px solid #303030;
  border-radius: 3px;
  color: ${COLORS.DISABLED};
`;

const SoundPanel = () => (
  <Panel $width={464}>
    <SoundHead>
      <TabBar><Tab label="基本声音" active plain /></TabBar>
    </SoundHead>
    <SoundRow $h={45} $italic>无选择项</SoundRow>
    <SoundRow as="label" $h={54} $off>
      预设:
      <DropDown label="预设" value="" h={30} flat />
    </SoundRow>
    <SoundRow $h={46} />
    <SoundBody>
      <SoundHint>为所选项分配标记以启用基于音频类型的编辑选项。</SoundHint>
      <SoundButton type="button"><SpeechGlyph />对话</SoundButton>
      <SoundButton type="button"><NotesGlyph />音乐</SoundButton>
      <SoundButton type="button"><BurstGlyph /><Latin>SFX</Latin></SoundButton>
      <SoundButton type="button"><LeafGlyph />环境</SoundButton>
    </SoundBody>
  </Panel>
);

/* ---------- levels and selection ---------- */

const LevelBox = styled.div`
  display: flex;
  flex: none;
  height: 66px;
  margin: 10px 9px 0 8px;
  border: 2px solid #000;
  background: ${COLORS.WELL};
`;

const LevelFloor = styled.span`
  width: 2px;
  background: linear-gradient(#d8d800 0 30px, ${COLORS.WELL} 30px 32px, #d8d800 32px);
`;

const LevelClip = styled.span`
  width: 14px;
  margin-left: auto;
  border-left: 1px solid #000;
  background: linear-gradient(transparent 30px, #000 30px 32px, transparent 32px);
`;

const LevelScale = styled.div`
  margin: 0 26px 0 10px;
`;

const LevelTicks = styled.div`
  display: flex;
  height: 6px;
`;

const LevelTick = styled.span`
  flex: 1;
  height: ${({ $major }) => ($major ? 6 : 3)}px;
  border-left: 1px solid ${COLORS.TEXT};
`;

const LastTick = styled.span`
  width: 1px;
  background: ${COLORS.TEXT};
`;

const LevelLabels = styled.div`
  display: flex;
  margin-left: -3px;
  font-size: 14px;
  line-height: 22px;
`;

const LevelUnit = styled.span`
  flex: 0 0 28px;
`;

const LevelLabel = styled.span`
  flex: 0 0 5%;
  text-align: center;
`;

const DB_TICKS = Array.from({ length: 60 }, (_, i) => i);
const DB_LABELS = Array.from({ length: 20 }, (_, i) => i * 3 - 57);

const LevelsPanel = () => (
  <Panel $grow>
    <TabBar><Tab label="电平" active plain /></TabBar>
    <LevelBox>
      <LevelFloor />
      <LevelClip />
    </LevelBox>
    <LevelScale>
      <LevelTicks>
        {DB_TICKS.map((tick) => (
          <LevelTick key={tick} $major={tick % 3 === 0} />
        ))}
        <LastTick />
      </LevelTicks>
      <LevelLabels>
        <LevelUnit>dB</LevelUnit>
        {DB_LABELS.map((label) => (
          <LevelLabel key={label}>{label}</LevelLabel>
        ))}
      </LevelLabels>
    </LevelScale>
  </Panel>
);

const TimeTable = styled.table`
  width: 353px;
  margin: 6px 0 0 16px;
  table-layout: fixed;
  border-spacing: 0;
`;

const TimeHead = styled.th`
  width: ${({ $w }) => ($w ? `${$w}px` : "auto")};
  height: ${({ scope }) => (scope === "row" ? 32 : 25)}px;
  padding: 0;
  font-weight: 400;
  text-align: left;
`;

const TimeValue = styled.td`
  padding: 0 0 0 3px;
  color: ${COLORS.BLUE};
  font-size: 16px;
`;

const TIMES = [
  { label: "选区", values: ["0:00.000", "0:00.000", "0:00.000"] },
  { label: "视图", values: ["0:00.000", "0:30.000", "0:30.000"] },
];

const SelectionPanel = () => (
  <Panel $width={385}>
    <TabBar><Tab label="选区/视图" active plain /></TabBar>
    <TimeTable>
      <thead>
        <tr>
          <TimeHead as="td" $w={43} />
          <TimeHead $w={108}>开始</TimeHead>
          <TimeHead $w={107}>结束</TimeHead>
          <TimeHead>持续时间</TimeHead>
        </tr>
      </thead>
      <tbody>
        {TIMES.map((row) => (
          <tr key={row.label}>
            <TimeHead scope="row">{row.label}</TimeHead>
            {row.values.map((value, i) => (
              <TimeValue key={i}>{value}</TimeValue>
            ))}
          </tr>
        ))}
      </tbody>
    </TimeTable>
  </Panel>
);

/* ---------- status bar ---------- */

const StatusBar = styled.footer`
  display: flex;
  align-items: center;
  flex: none;
  height: 30px;
  padding: 0 0 2px 12px;
  background: linear-gradient(#555, #555) 227px 100% / 55px 2px no-repeat, ${COLORS.PANEL};
  white-space: nowrap;
`;

const StatusText = styled.span`
  flex: 1;
`;

const StatusCell = styled.span`
  width: ${({ $w }) => $w}px;
  height: 20px;
  padding: 0 12px;
  border-left: 1px solid ${COLORS.LINE};
  line-height: 22px;
  text-align: ${({ $right }) => ($right ? "right" : "left")};
`;

function App() {
  return (
    <Page>
      <GlobalStyle />
      <Chrome />
      <Workspace>
        <Column $width={484}>
          <FilesPanel />
          <MediaPanel />
          <Panel $height={45}>
            <TabBar>
              <Tab label="历史记录" active />
              <Tab label="视频" />
            </TabBar>
          </Panel>
        </Column>
        <Column>
          <PanelRow>
            <EditorPanel />
            <SoundPanel />
          </PanelRow>
          <PanelRow $height={144}>
            <LevelsPanel />
            <SelectionPanel />
          </PanelRow>
        </Column>
      </Workspace>
      <StatusBar>
        <StatusText>多轨会话备份保存已完成，用时 <Latin>0.01</Latin> 秒</StatusText>
        <StatusCell $w={75} />
        <StatusCell $w={75} />
        <StatusCell $w={189}><Latin>48000 Hz ● 32</Latin> 位混合</StatusCell>
        <StatusCell $w={91}><Latin>10.99 MB</Latin></StatusCell>
        <StatusCell $w={99} $right><Latin>0:30.000</Latin></StatusCell>
        <StatusCell $w={129}><Latin>38.63 GB</Latin> 空闲</StatusCell>
        <StatusCell $w={73} />
      </StatusBar>
    </Page>
  );
}

export default App;
